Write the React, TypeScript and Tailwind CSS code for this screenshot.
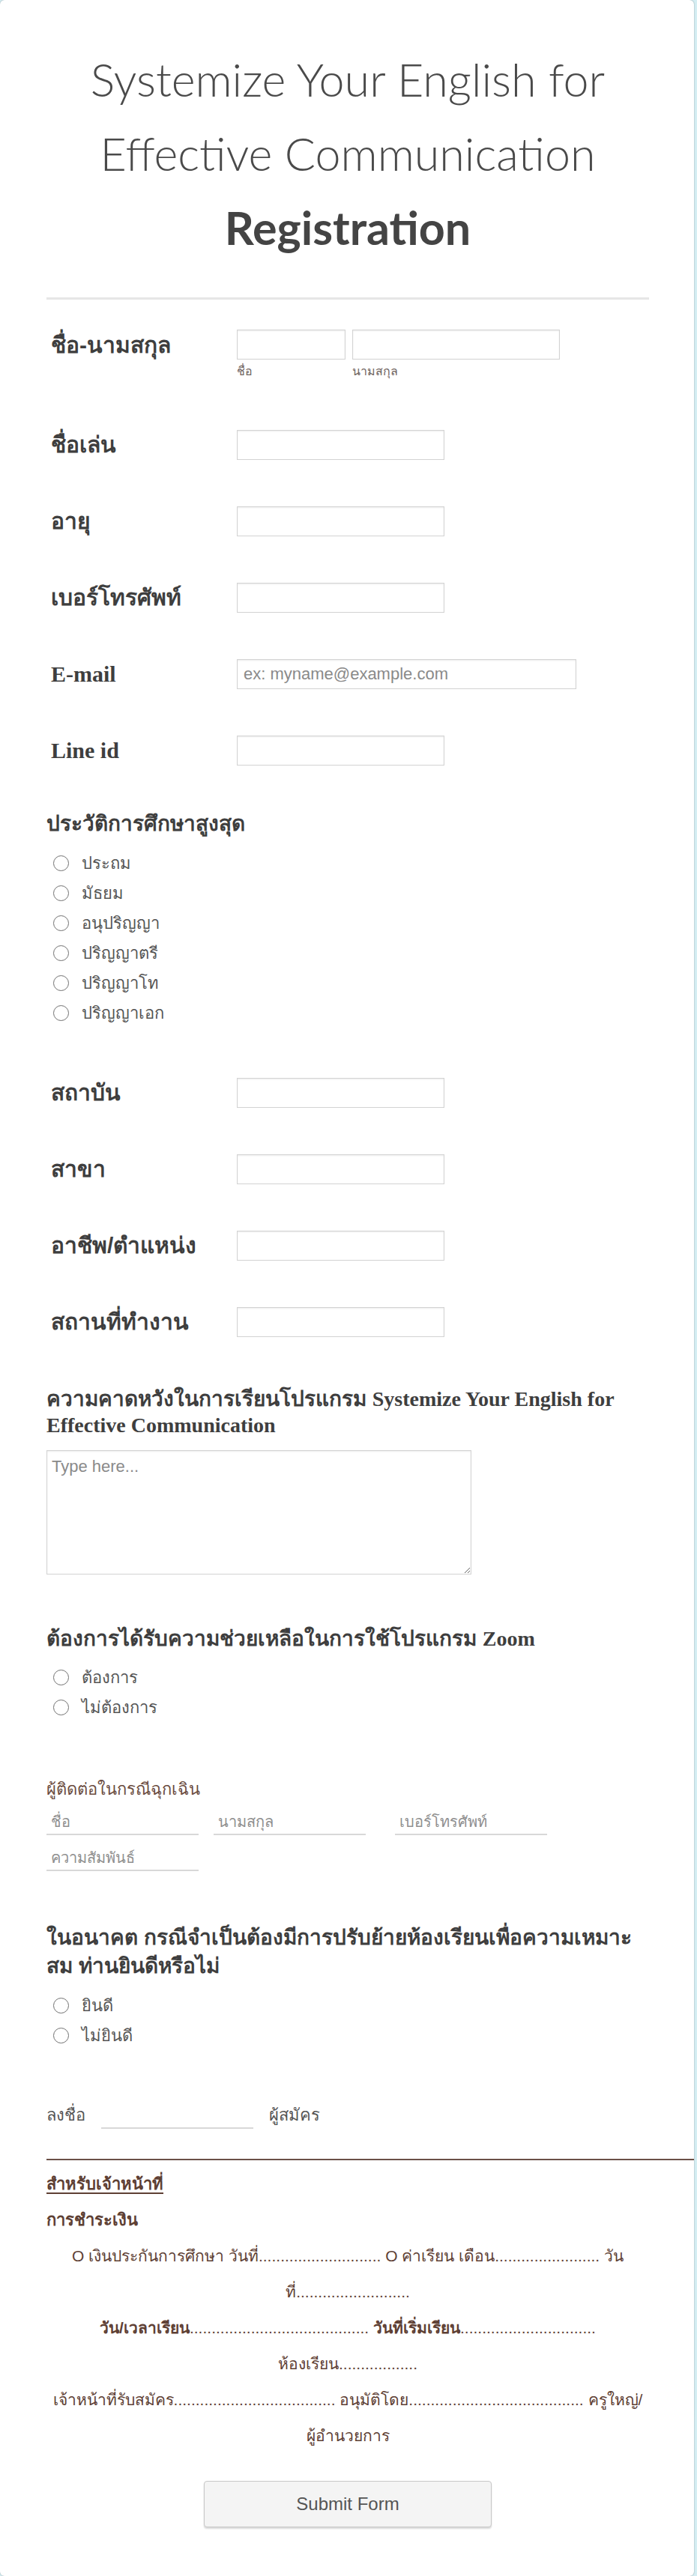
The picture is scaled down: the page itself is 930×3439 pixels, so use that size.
import type { FC } from 'react';

const SANS = "font-['Liberation_Sans',Tahoma,sans-serif]";
const SERIF = "font-['Liberation_Serif','Liberation_Sans',serif]";

const inputBox =
  'h-[40px] border border-[#d3d3d3] bg-white shadow-[inset_0_1px_2px_rgba(0,0,0,0.08)] px-2 text-[22px] text-[#555] outline-none';

interface RowProps {
  label: string;
  serif?: boolean;
  wide?: boolean;
  placeholder?: string;
  gap?: string;
}

const Row: FC<RowProps> = ({ label, serif, wide, placeholder, gap = 'mt-[62px]' }) => (
  <div className={`flex items-center ${gap}`}>
    <div
      className={`w-[254px] pl-[6px] text-[30px] font-bold leading-[40px] text-[#3e3e3e] ${serif ? SERIF : SANS}`}
    >
      {label}
    </div>
    <input
      placeholder={placeholder}
      className={`${inputBox} ${wide ? 'w-[453px]' : 'w-[277px]'} ${SANS} placeholder:text-[#8a8a8a]`}
    />
  </div>
);

const Radio: FC<{ label: string }> = ({ label }) => (
  <label className="flex h-[40px] items-center pl-[9px]">
    <span className="h-[21px] w-[21px] rounded-full border-[1.5px] border-[#6f6f6f] bg-white" />
    <span className={`ml-[17px] text-[22px] text-[#555] ${SANS}`}>{label}</span>
  </label>
);

const Heading: FC<{ children: React.ReactNode; className?: string }> = ({ children, className }) => (
  <h3 className={`text-[28px] font-bold text-[#3e3e3e] ${SANS} ${className ?? ''}`}>{children}</h3>
);

const LineInput: FC<{ placeholder: string; className?: string }> = ({ placeholder, className }) => (
  <input
    placeholder={placeholder}
    className={`h-[34px] border-b-2 border-[#d8d8d8] bg-transparent px-[6px] text-[20px] text-[#555] outline-none placeholder:text-[#8f8f8f] ${SANS} ${className ?? ''}`}
  />
);

const dots = (n: number) => '.'.repeat(n);

export default function App() {
  return (
    <div className="min-h-[3439px] bg-[#d5eef3] pr-[4px] pb-[3px]">
      <div className="w-[926px] rounded-[6px] bg-white pl-[62px] pr-[60px] pt-[56px] pb-[65px] shadow-[0_0_2px_rgba(0,0,0,0.35)]">
        {/* header */}
        <div className="text-center font-['Lato',sans-serif] text-[#4a4a4a]">
          <div className="text-[61px] font-light leading-[99px]">Systemize Your English for</div>
          <div className="text-[61px] font-light leading-[99px]">Effective Communication</div>
          <div className="text-[61px] font-bold leading-[99px] text-[#444]">Registration</div>
        </div>
        <div className="mt-[44px] h-[3px] bg-[#e6e6e6]" />

        {/* name */}
        <div className="mt-[40px] flex">
          <div className={`flex h-[40px] w-[254px] items-center pl-[6px] text-[30px] font-bold text-[#3e3e3e] ${SANS}`}>
            ชื่อ-นามสกุล
          </div>
          <div className="flex gap-[9px]">
            <div className="flex flex-col">
              <input className={`${inputBox} w-[145px]`} />
              <span className={`mt-1 text-[16px] leading-[24px] text-[#6f6461] ${SANS}`}>ชื่อ</span>
            </div>
            <div className="flex flex-col">
              <input className={`${inputBox} w-[277px]`} />
              <span className={`mt-1 text-[16px] leading-[24px] text-[#6f6461] ${SANS}`}>นามสกุล</span>
            </div>
          </div>
        </div>

        <Row label="ชื่อเล่น" gap="mt-[66px]" />
        <Row label="อายุ" />
        <Row label="เบอร์โทรศัพท์" />
        <Row label="E-mail" serif wide placeholder="ex: myname@example.com" />
        <Row label="Line id" serif />

        {/* education */}
        <Heading className="mt-[60px] leading-[36px]">ประวัติการศึกษาสูงสุด</Heading>
        <div className="mt-[14px]">
          {['ประถม', 'มัธยม', 'อนุปริญญา', 'ปริญญาตรี', 'ปริญญาโท', 'ปริญญาเอก'].map((o) => (
            <Radio key={o} label={o} />
          ))}
        </div>

        <Row label="สถาบัน" gap="mt-[67px]" />
        <Row label="สาขา" />
        <Row label="อาชีพ/ตำแหน่ง" />
        <Row label="สถานที่ทำงาน" />

        {/* expectation */}
        <h3 className={`mt-[65px] text-[28px] font-bold leading-[35px] text-[#3e3e3e] ${SANS}`}>
          ความคาดหวังในการเรียนโปรแกรม <span className={SERIF}>Systemize Your English for</span>
          <br />
          <span className={SERIF}>Effective Communication</span>
        </h3>
        <textarea
          placeholder="Type here..."
          className={`mt-[16px] block h-[166px] w-[567px] border border-[#d3d3d3] px-[6px] py-[4px] text-[22px] text-[#555] outline-none shadow-[inset_0_1px_2px_rgba(0,0,0,0.08)] placeholder:text-[#8a8a8a] ${SANS}`}
        />

        <h3 className={`mt-[68px] text-[28px] font-bold leading-[36px] text-[#3e3e3e] ${SANS}`}>
          ต้องการได้รับความช่วยเหลือในการใช้โปรแกรม <span className={SERIF}>Zoom</span>
        </h3>
        <div className="mt-[13px]">
          <Radio label="ต้องการ" />
          <Radio label="ไม่ต้องการ" />
        </div>

        {/* emergency contact */}
        <div className={`mt-[75px] text-[22px] leading-[30px] text-[#6b4c3f] ${SANS}`}>ผู้ติดต่อในกรณีฉุกเฉิน</div>
        <div className="mt-[12px] flex">
          <LineInput placeholder="ชื่อ" className="w-[203px]" />
          <LineInput placeholder="นามสกุล" className="ml-[20px] w-[203px]" />
          <LineInput placeholder="เบอร์โทรศัพท์" className="ml-[39px] w-[203px]" />
        </div>
        <div className="mt-[14px] flex">
          <LineInput placeholder="ความสัมพันธ์" className="w-[203px]" />
        </div>

        <Heading className="mt-[70px] leading-[38px]">
          ในอนาคต กรณีจำเป็นต้องมีการปรับย้ายห้องเรียนเพื่อความเหมาะ
          <br />
          สม ท่านยินดีหรือไม่
        </Heading>
        <div className="mt-[13px]">
          <Radio label="ยินดี" />
          <Radio label="ไม่ยินดี" />
        </div>

        {/* signature */}
        <div className={`mt-[70px] flex items-end text-[22px] text-[#555] ${SANS}`}>
          <span className="pb-[2px]">ลงชื่อ</span>
          <LineInput placeholder="" className="ml-[21px] w-[203px]" />
          <span className="ml-[21px] pb-[2px]">ผู้สมัคร</span>
        </div>

        <div className="mt-[40px] -mr-[60px] h-[2px] bg-[#6b5047]" />

        {/* staff only */}
        <div className={`text-[#5e4034] ${SANS}`}>
          <div className="mt-[17px] text-[22px] font-bold leading-[30px]">
            <span className="underline decoration-2 underline-offset-4">สำหรับเจ้าหน้าที่</span>
          </div>
          <div className="mt-[18px] text-[22px] font-bold leading-[30px]">การชำระเงิน</div>
          <div className="mt-[9px] text-center text-[21px] leading-[48px]">
            <p>
              O เงินประกันการศึกษา วันที่{dots(28)} O ค่าเรียน เดือน{dots(24)} วัน
              <br />
              ที่{dots(26)}
            </p>
            <p>
              <b>วัน/เวลาเรียน</b>
              {dots(41)} <b>วันที่เริ่มเรียน</b>
              {dots(31)}
            </p>
            <p>ห้องเรียน{dots(18)}</p>
            <p>
              เจ้าหน้าที่รับสมัคร{dots(37)} อนุมัติโดย{dots(40)} ครูใหญ่/
              <br />
              ผู้อำนวยการ
            </p>
          </div>
        </div>

        <div className="mt-[36px] flex justify-center">
          <button
            className={`h-[62px] w-[384px] rounded-[4px] border border-[#c8c8c8] bg-[#f4f4f4] text-[24px] text-[#555] shadow-[0_2px_2px_rgba(0,0,0,0.15)] ${SANS}`}
          >
            Submit Form
          </button>
        </div>
      </div>
    </div>
  );
}
